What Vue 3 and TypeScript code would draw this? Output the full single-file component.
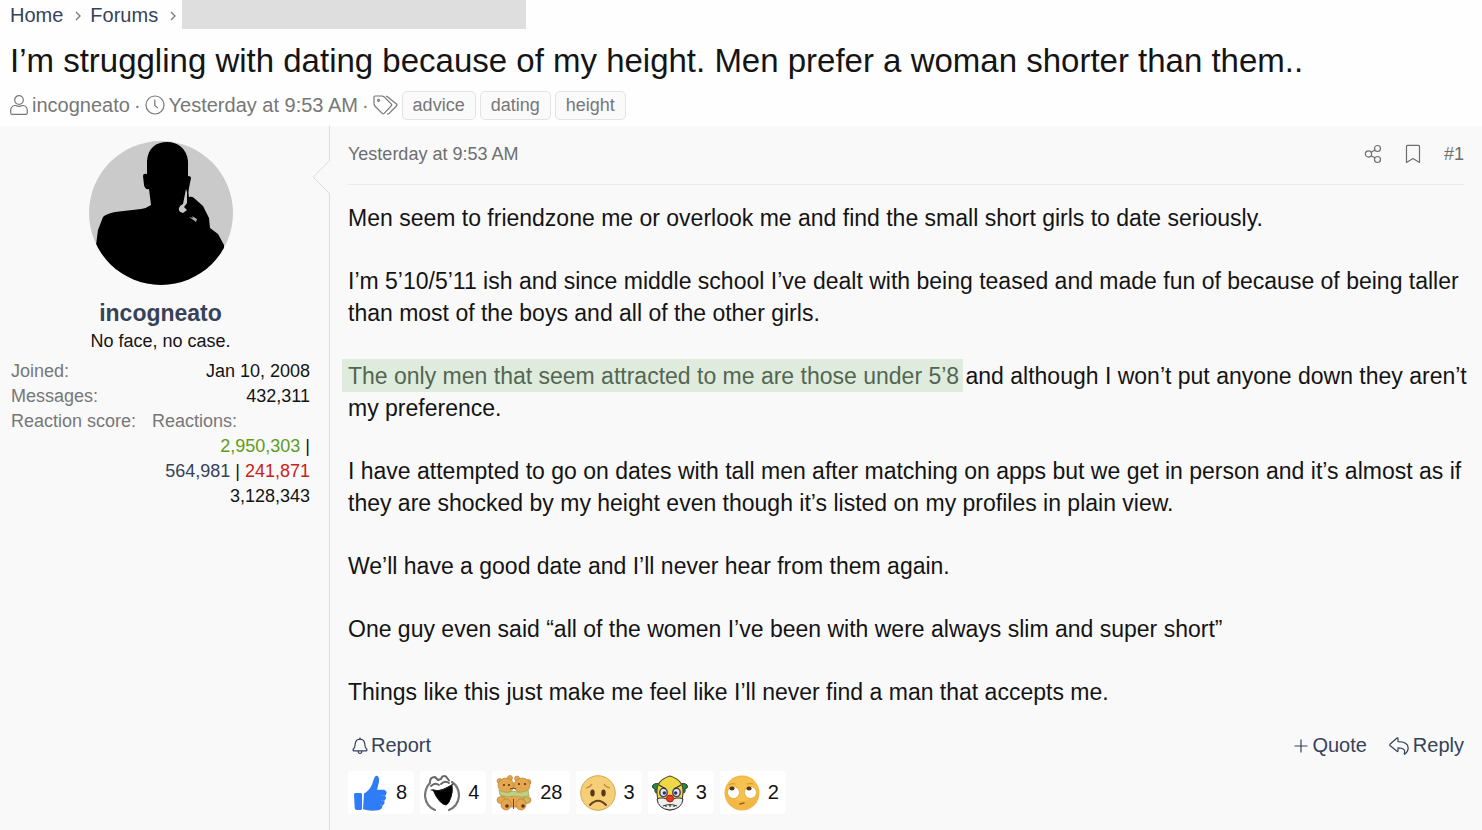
<script setup lang="ts">
const tags: string[] = ['advice', 'dating', 'height']

interface Reaction {
  id: string
  label: string
  count: number
}

const reactions: Reaction[] = [
  { id: 'like', label: 'Like', count: 8 },
  { id: 'laugh', label: 'Laugh', count: 4 },
  { id: 'hugs', label: 'Hugs', count: 28 },
  { id: 'sad', label: 'Sad', count: 3 },
  { id: 'clown', label: 'Clown', count: 3 },
  { id: 'eyeroll', label: 'Eye roll', count: 2 },
]
</script>

<template>
  <div class="page">
    <header class="head">
      <nav class="crumbs" aria-label="Breadcrumb">
        <a href="#">Home</a>
        <svg class="chev" viewBox="0 0 6 10" aria-hidden="true"><path d="M1 1l4 4-4 4" /></svg>
        <a href="#">Forums</a>
        <svg class="chev last" viewBox="0 0 6 10" aria-hidden="true"><path d="M1 1l4 4-4 4" /></svg>
        <span class="redacted"></span>
      </nav>
      <h1>I’m struggling with dating because of my height. Men prefer a woman shorter than them..</h1>
      <div class="meta">
        <svg class="ic user" viewBox="0 0 18 20" aria-hidden="true">
          <circle cx="9" cy="5" r="4.3" />
          <path d="M4.5 10.5h1.3q3.2 1.6 6.4 0h1.3q3.8 1 3.8 5v2.2q0 1.600-1.500 1.600H2.200q-1.500 0-1.500-1.600v-2.200q0-4 3.800-5z" />
        </svg>
        <a href="#">incogneato</a>
        <span class="dot">·</span>
        <svg class="ic clock" viewBox="0 0 20 20" aria-hidden="true">
          <circle cx="10" cy="10" r="9" /><path d="M9.8 4.500v6l3.200 2.600" />
        </svg>
        <a href="#">Yesterday at 9:53 AM</a>
        <span class="dot">·</span>
        <svg class="ic tags" viewBox="0 0 25 20" aria-hidden="true">
          <path d="M1 2.200Q1 1 2.200 1h7l2 .9 7 7q1 1 0 2l-7 7.400q-1 1-2 0L1.800 11 1 9z" />
          <path d="M13 1l1.500.8L23.400 9q1 1 0 2L16 18.600q-.9.7-1.700 0" />
          <circle cx="5.600" cy="5.300" r="1" />
        </svg>
        <a v-for="tag in tags" :key="tag" class="tag" href="#">{{ tag }}</a>
      </div>
    </header>

    <article class="post">
      <aside class="user-cell">
        <svg class="avatar" viewBox="0 0 144 144" role="img" aria-label="incogneato">
          <defs>
            <clipPath id="face"><circle cx="72" cy="72" r="72" /></clipPath>
            <filter id="soft"><feGaussianBlur stdDeviation="0.6" /></filter>
          </defs>
          <g clip-path="url(#face)">
            <rect width="144" height="144" fill="#cacaca" />
            <g filter="url(#soft)">
              <path d="M58 33V20C59 7 67 1 78 1s20 7 21 19v15q3 0 3 2l-2 10q-1 6 0 9 3-1 5 1l9 8 6 12 1 10 8 6 6 11v46H0V106l7-2 2-15 5-13q3-3 12-5l26-3q6-1 10-4l-2-16q-4 1-5-4l-1-9q0-3 4-2z" />
              <path d="M97 48l1 3v11l-3 4 3 3-4 3q-5-1-4-5 1-3 4-4z" fill="#c8c8c8" />
              <path d="M100 76l4 1-1-2 5 3-1 3-4-3z" fill="#aaa" />
            </g>
          </g>
        </svg>
        <a class="name" href="#">incogneato</a>
        <div class="motto">No face, no case.</div>
        <dl class="stats">
          <div><dt>Joined:</dt><dd>Jan 10, 2008</dd></div>
          <div><dt>Messages:</dt><dd>432,311</dd></div>
          <div>
            <dt>Reaction score:</dt>
            <dd>
              <span class="sub">Reactions:</span>
              <span class="row"><span class="pos">2,950,303</span> |</span>
              <span class="row"><span class="neu">564,981</span> | <span class="neg">241,871</span></span>
              <span class="row">3,128,343</span>
            </dd>
          </div>
        </dl>
        <svg class="arrow" viewBox="0 0 18 34" aria-hidden="true">
          <rect x="16" y="1" width="2" height="32" /><path d="M17 1L1 17l16 16" />
        </svg>
      </aside>

      <section class="main">
        <div class="bar">
          <a href="#">Yesterday at 9:53 AM</a>
          <div class="tools">
            <button type="button" aria-label="Share">
              <svg class="ic share" viewBox="0 0 18 20" aria-hidden="true">
                <circle cx="4.500" cy="10" r="3.100" /><circle cx="13.500" cy="4.500" r="3" /><circle cx="13.500" cy="15.500" r="3" />
                <path d="M7.200 8.300L10.900 6M7.200 11.700l3.700 2.300" />
              </svg>
            </button>
            <button type="button" aria-label="Bookmark">
              <svg class="ic mark" viewBox="0 0 16 20" aria-hidden="true"><path d="M1.500 18.500V2.400q0-1 1-1h11q1 0 1 1v16.100L8 14.500z" /></svg>
            </button>
            <a href="#">#1</a>
          </div>
        </div>

        <div class="body">
          <p>Men seem to friendzone me or overlook me and find the small short girls to date seriously.</p>
          <p>I’m 5’10/5’11 ish and since middle school I’ve dealt with being teased and made fun of because of being taller than most of the boys and all of the other girls.</p>
          <p><mark>The only men that seem attracted to me are those under 5’8</mark> and although I won’t put anyone down they aren’t my preference.</p>
          <p>I have attempted to go on dates with tall men after matching on apps but we get in person and it’s almost as if they are shocked by my height even though it’s listed on my profiles in plain view.</p>
          <p>We’ll have a good date and I’ll never hear from them again.</p>
          <p>One guy even said “all of the women I’ve been with were always slim and super short”</p>
          <p>Things like this just make me feel like I’ll never find a man that accepts me.</p>
        </div>

        <div class="actions">
          <button type="button" class="report">
            <svg class="ic bell" viewBox="0 0 16 18" aria-hidden="true">
              <path d="M8 .5v1.700M1.500 13.800q-1-.8 0-1.800 1.700-2 1.700-5Q3.600 2.300 8 2.200q4.400.1 4.800 4.800 0 3 1.700 5 1 1 0 1.800zM6 14q.2 2.500 2 2.500T10 14" />
            </svg>Report
          </button>
          <button type="button" class="quote">
            <svg class="ic plus" viewBox="0 0 14 14" aria-hidden="true"><path d="M7 .5v13M.5 7h13" /></svg>Quote
          </button>
          <button type="button">
            <svg class="ic reply" viewBox="0 0 20 18" aria-hidden="true">
              <path d="M1 7.300L8 1q1-.7 1 .6v3q10 0 10.200 6.400 0 3.500-3.200 6-1 .5-.6-.7 1.600-5.500-6.400-5.500v3q0 1.200-1 .5L1 8.500q-.6-.6 0-1.200z" />
            </svg>Reply
          </button>
        </div>

        <div class="reactions">
          <button v-for="r in reactions" :key="r.id" type="button" class="chip" :aria-label="`${r.label} ${r.count}`">
            <svg v-if="r.id === 'like'" class="emo" viewBox="0 0 36 36" aria-hidden="true">
              <path fill="#2f7df6" d="M2 19.500q0-1.500 1.500-1.500H9l1 1v15l-1 1H5q-2 0-2.300-2zM12 18.500q5-2.500 8-9l2-6Q23 .2 25 .8q2.500 1 2 6l-2 8h7q3 .5 2.500 3.500-.2 1.700-1.500 2.400 1.500 1.500.7 3.300-.5 1.300-1.700 1.700 1 1.500.2 3-.5 1.100-1.800 1.500.4 4.500-4.400 5-8 1.300-15-1z" />
              <path d="M29 20.700h4M29 25.600h3.500M28 30h3" stroke="#5597ff" />
            </svg>
            <svg v-else-if="r.id === 'laugh'" class="emo" viewBox="0 0 36 36" fill="none" stroke-linecap="round" aria-hidden="true">
              <path d="M6 8Q1 13 1 21q1 10 10 14M28 7q7 5 7 14-1 10-10 14" stroke="#777" stroke-width="2.200" />
              <path d="M6 7q0-5 5-5l3 3 3-1q1-4 5-2.500l3 4" stroke="#666" stroke-width="2" />
              <path d="M7 11q4-4 8-1M17 9q4-4 8-1" stroke="#666" stroke-width="1.800" />
              <path d="M9 15q6 2 11-1l8-4q1 7-1 12-2 7-5 8-7-1-13-15z" fill="#000" stroke="#111" />
              <path d="M7 15q12 3 22-6" stroke="#222" />
            </svg>
            <svg v-else-if="r.id === 'hugs'" class="emo" viewBox="0 0 36 36" aria-hidden="true">
              <g fill="#e5a650" stroke="#b27b35" stroke-width="0.600">
                <circle cx="3.500" cy="6" r="2.500" /><circle cx="14" cy="3" r="2.500" /><circle cx="21" cy="3.500" r="2.500" /><circle cx="32.500" cy="7" r="2.500" />
                <path d="M5 17h26l-2 15H6z" />
                <ellipse cx="10" cy="10.500" rx="8" ry="7.500" /><ellipse cx="26" cy="10.500" rx="8" ry="7.500" />
                <ellipse cx="5" cy="25" rx="4" ry="3.500" /><ellipse cx="31" cy="25" rx="4" ry="3.500" />
                <ellipse cx="10" cy="29.500" rx="5" ry="5.500" /><ellipse cx="25" cy="29.500" rx="5" ry="5.500" />
              </g>
              <path d="M3 15q7 4 14 1 8 3 15-1l1 6q-8 2-15 0l-6 1-8-2z" fill="#c3cd7f" stroke="#98a95c" stroke-width="0.800" />
              <path d="M30 20l3 7-4-1z" fill="#b4c16d" />
              <g fill="#623510"><circle cx="8" cy="10" r="1.100" /><circle cx="13" cy="10" r="1.100" /><circle cx="23" cy="9" r="1.100" /><circle cx="29" cy="9" r="1.100" /><circle cx="11" cy="31" r="1.800" /><circle cx="27" cy="31" r="1.800" /></g>
              <path d="M14 14q3-2 6 0M17.500 24v10" fill="none" stroke="#784515" />
            </svg>
            <svg v-else-if="r.id === 'sad'" class="emo" viewBox="0 0 36 36" aria-hidden="true">
              <circle cx="18" cy="18" r="17.300" fill="#f5cf76" stroke="#d7a64e" />
              <ellipse cx="12.500" cy="18" rx="2.200" ry="3.400" fill="#5b351a" /><ellipse cx="23.500" cy="18" rx="2.200" ry="3.400" fill="#5b351a" />
              <path d="M6 13q4-.5 6-4M24 9q2 3.500 6 4" fill="none" stroke="#bd8740" stroke-width="1.200" />
              <path d="M10 30q8-8.500 16 0" fill="none" stroke="#65411f" stroke-width="2" stroke-linecap="round" />
            </svg>
            <svg v-else-if="r.id === 'clown'" class="emo" viewBox="0 0 36 36" aria-hidden="true">
              <path d="M8 17Q2 20 3 14-1 13 1 10q3-3 9 0zM28 17q6 3 5-3 4-1 2-4-3-3-9 0z" fill="#258944" stroke="#243b28" />
              <path d="M5 18Q4 5 18 1q14 4 13 17l-1 8q-5 9-12 9T6 26z" fill="#efd848" stroke="#5c4b21" stroke-width="1.200" />
              <path d="M5 24q6-3 13 2 7-5 13-2-1 10-13 11Q6 34 5 24z" fill="#eee" stroke="#333" />
              <g fill="#e9e6f4" stroke="#4c4858" stroke-width="1.500"><ellipse cx="11.500" cy="17.500" rx="3.700" ry="4.200" /><ellipse cx="24.500" cy="17.500" rx="3.700" ry="4.200" /></g>
              <circle cx="12.300" cy="18" r="1.700" fill="#252f74" /><circle cx="23.700" cy="18" r="1.700" fill="#252f74" />
              <circle cx="18" cy="23.500" r="3.500" fill="#ec3823" stroke="#a22418" />
              <path d="M7 10l7 4M29 10l-7 4M11 31q7-3 14 0M14 29.500v2.500M18 29v3M22 29.500v2.500" fill="none" stroke="#333" stroke-width="1.200" />
            </svg>
            <svg v-else class="emo" viewBox="0 0 36 36" aria-hidden="true">
              <circle cx="18" cy="18" r="17.500" fill="#f3b843" /><ellipse cx="18" cy="14" rx="15" ry="12" fill="#f6c14d" />
              <circle cx="9.500" cy="17.500" r="6" fill="#fff" stroke="#dfae58" /><circle cx="26.500" cy="17.500" r="6" fill="#fff" stroke="#dfae58" />
              <ellipse cx="8" cy="13.500" rx="2.600" ry="2" fill="#54351a" /><ellipse cx="25" cy="13.500" rx="2.600" ry="2" fill="#54351a" />
              <path d="M5 10q3-2 6-1M23 9q4-1 6 0" fill="none" stroke="#d49b3c" stroke-width="1.200" stroke-linecap="round" />
              <path d="M16 29l4-1" stroke="#996024" stroke-width="1.500" stroke-linecap="round" />
            </svg>
            <span>{{ r.count }}</span>
          </button>
        </div>
      </section>
    </article>
  </div>
</template>

<style>
body {
  background: #fefefe;
}
</style>

<style scoped>
.page {
  min-height: 100vh;
  display: flex;
  flex-direction: column;
  font-family: "Liberation Sans", Arial, sans-serif;
  font-size: 18px;
  line-height: 25px;
  color: #141414;
}
a {
  color: inherit;
  text-decoration: none;
}
button {
  display: flex;
  align-items: center;
  padding: 0;
  border: 0;
  background: none;
  color: inherit;
  font: inherit;
  cursor: pointer;
}
svg {
  display: block;
  flex: none;
}
.ic {
  fill: none;
  stroke: currentColor;
  stroke-width: 1.2;
  stroke-linejoin: round;
}
.head {
  padding-left: 10px;
}
.crumbs {
  display: flex;
  height: 29px;
  font-size: 20px;
  line-height: 30px;
  color: #36425a;
}
.chev {
  width: 6px;
  height: 10px;
  margin: 11px 9px 0 12px;
  fill: none;
  stroke: #777;
  stroke-width: 1.3;
}
.chev.last {
  margin-right: 6px;
}
.redacted {
  width: 344px;
  background: #dedede;
}
h1 {
  margin: 9px 0 0;
  font-size: 33px;
  line-height: 46px;
  font-weight: 400;
}
.meta {
  display: flex;
  align-items: center;
  height: 30px;
  padding: 6px 0;
  font-size: 20px;
  color: #777;
}
.user {
  width: 18px;
  height: 20px;
  margin-right: 4px;
}
.dot {
  margin: 0 4px;
}
.clock {
  width: 20px;
  height: 20px;
  margin-right: 4px;
}
.tags {
  width: 25px;
  height: 20px;
}
.tag {
  margin-left: 4px;
  padding: 0 10px;
  border: 1px solid #e3e3e3;
  border-radius: 5px;
  background: #fafafa;
  font-size: 18px;
  line-height: 27px;
}
.post {
  flex: 1;
  display: flex;
  background: #f9f9f9;
}
.user-cell {
  position: relative;
  box-sizing: border-box;
  width: 330px;
  flex: none;
  padding: 15px 19px 0 11px;
  border-right: 1px solid #dedede;
  text-align: center;
}
.avatar {
  width: 144px;
  height: 144px;
  margin: 0 auto;
}
.name {
  display: block;
  margin-top: 16px;
  font-size: 23px;
  font-weight: 700;
  color: #36425a;
}
.motto {
  margin-top: 3px;
}
.stats {
  margin: 5px 0 0;
  color: #141414;
}
.stats > div {
  display: flex;
  justify-content: space-between;
}
dt,
.sub {
  color: #777;
}
dd {
  margin: 0;
  text-align: right;
}
.stats > div:last-child dd {
  flex: 1;
  margin-left: 16px;
}
.sub,
.row {
  display: block;
}
.sub {
  text-align: left;
}
.pos {
  color: #5e9c20;
}
.neu {
  color: #36425a;
}
.neg {
  color: #cb2217;
}
.arrow {
  position: absolute;
  top: 34px;
  right: -1px;
  width: 18px;
  height: 34px;
  fill: #f9f9f9;
  stroke: #dedede;
}
.arrow rect {
  stroke: none;
}
.main {
  flex: 1;
  min-width: 0;
  padding: 0 18px;
}
.bar {
  display: flex;
  justify-content: space-between;
  align-items: center;
  height: 56px;
  padding-bottom: 2px;
  border-bottom: 1px solid #ebebeb;
  color: #6e6e6e;
}
.tools {
  display: flex;
  align-items: center;
  gap: 23px;
}
.share {
  width: 18px;
  height: 20px;
}
.mark {
  width: 16px;
  height: 20px;
}
.body {
  display: flex;
  flex-direction: column;
  gap: 31px;
  margin-right: -8px;
  padding-top: 17px;
  font-size: 23px;
  line-height: 32px;
}
p {
  margin: 0;
}
mark {
  margin: 0 -4px 0 -6px;
  padding: 4px 4px 3px 6px;
  background: #dfebdc;
  color: #536653;
}
.actions {
  display: flex;
  align-items: center;
  gap: 22px;
  margin-top: 25px;
  font-size: 20px;
  color: #36425a;
}
.report {
  margin: 0 auto 0 4px;
}
.bell {
  width: 16px;
  height: 18px;
  margin-right: 3px;
}
.plus {
  width: 14px;
  height: 14px;
  margin-right: 4px;
}
.reply {
  width: 20px;
  height: 18px;
  margin-right: 4px;
}
.reactions {
  display: flex;
  gap: 6px;
  margin-top: 13px;
}
.chip {
  gap: 8px;
  height: 43px;
  padding: 0 7px 0 4px;
  border-radius: 3px;
  background: #fff;
  font-size: 20px;
}
.emo {
  width: 36px;
  height: 36px;
}
</style>
